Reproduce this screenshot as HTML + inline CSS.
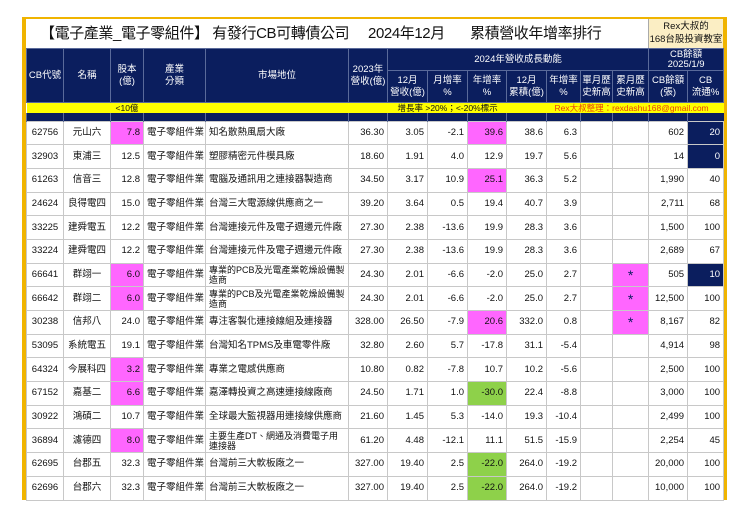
<!DOCTYPE html>
<html><head><meta charset="utf-8"><style>
*{margin:0;padding:0;box-sizing:border-box}
body{width:740px;height:523px;background:#fff;position:relative;overflow:hidden;font-family:"Liberation Sans","Noto Sans CJK TC",sans-serif;color:#111}
#frame{position:absolute;left:22px;top:17px;width:705px;height:483px;border:4px solid #f0b400;border-top-width:2px;border-bottom:0}
#title{position:absolute;left:26px;top:19px;width:697px;height:29px;background:#fff;font-size:15px;letter-spacing:-0.4px;line-height:29px;white-space:nowrap}
#title span{position:absolute;top:0}
#rex{position:absolute;left:622px;top:0;width:75px;height:29px;background:#fbeec4;border-left:1px solid #aaa;font-size:9.5px;letter-spacing:0;line-height:13px;text-align:center;padding-top:1px}
table{position:absolute;left:26px;top:48px;border-collapse:collapse;table-layout:fixed;width:697px;font-size:9.5px}
td{overflow:hidden;white-space:nowrap;padding:0 3px}
.h td{background:#0b1e5e;color:#fff;text-align:center;border:1px solid #5a6a9a;line-height:12px;font-size:9.5px;padding:0 1px}
.h td.t{line-height:10px}
.y td{background:#ffff00;height:10px;font-size:8.5px;line-height:10px;border:0;overflow:visible}
.n td{background:#0b1e5e;height:8px;border-left:1px solid #5a6a9a}
.d td{height:23.7px;border:1px solid #c8c8c8;text-align:right;line-height:10px}
.d td.c{text-align:center}.d td.l{text-align:left}
.w{white-space:normal!important;font-size:9px}
.p{background:#ff66ff}.g{background:#8ed14a}.b{background:#0b1e5e;color:#fff}
.s{background:#ff66ff;text-align:center!important;color:#0b1e5e;font-size:14px}
</style></head><body>
<div id="frame"></div>
<div id="title">
<span style="left:14px">【電子產業_電子零組件】 有發行CB可轉債公司</span>
<span style="left:342px">2024年12月</span>
<span style="left:444px">累積營收年增率排行</span>
<div id="rex">Rex大叔的<br>168台股投資教室</div>
</div>
<table>
<colgroup><col style="width:37px"><col style="width:47px"><col style="width:33px"><col style="width:62px"><col style="width:143px"><col style="width:39px"><col style="width:40px"><col style="width:40px"><col style="width:39px"><col style="width:40px"><col style="width:34px"><col style="width:32px"><col style="width:36px"><col style="width:39px"><col style="width:36px"></colgroup>
<tr class="h" style="height:22px"><td rowspan="2">CB代號</td><td rowspan="2">名稱</td><td rowspan="2">股本<br>(億)</td><td rowspan="2">產業<br>分類</td><td rowspan="2">市場地位</td><td rowspan="2">2023年<br>營收(億)</td><td colspan="7">2024年營收成長動能</td><td colspan="2" class="t">CB餘額<br>2025/1/9</td></tr>
<tr class="h" style="height:32px"><td>12月<br>營收(億)</td><td>月增率<br>%</td><td>年增率<br>%</td><td>12月<br>累積(億)</td><td>年增率<br>%</td><td>單月歷<br>史新高</td><td>累月歷<br>史新高</td><td>CB餘額<br>(張)</td><td>CB<br>流通%</td></tr>
<tr class="y"><td></td><td></td><td colspan="3" style="padding-left:5px">&lt;10億</td><td></td><td colspan="4" style="padding-left:10px">增長率 &gt;20%；&lt;-20%標示</td><td colspan="5" style="color:#e8420a;padding-left:8px">Rex大叔整理：rexdashu168@gmail.com</td></tr>
<tr class="n"><td></td><td></td><td></td><td></td><td></td><td></td><td></td><td></td><td></td><td></td><td></td><td></td><td></td><td></td><td></td></tr>
<tr class="d"><td class="c">62756</td><td class="c">元山六</td><td class="p">7.8</td><td class="l">電子零組件業</td><td class="l">知名散熱風扇大廠</td><td>36.30</td><td>3.05</td><td>-2.1</td><td class="p">39.6</td><td>38.6</td><td>6.3</td><td></td><td></td><td>602</td><td class="b">20</td></tr>
<tr class="d"><td class="c">32903</td><td class="c">東浦三</td><td>12.5</td><td class="l">電子零組件業</td><td class="l">塑膠精密元件模具廠</td><td>18.60</td><td>1.91</td><td>4.0</td><td>12.9</td><td>19.7</td><td>5.6</td><td></td><td></td><td>14</td><td class="b">0</td></tr>
<tr class="d"><td class="c">61263</td><td class="c">信音三</td><td>12.8</td><td class="l">電子零組件業</td><td class="l">電腦及通訊用之連接器製造商</td><td>34.50</td><td>3.17</td><td>10.9</td><td class="p">25.1</td><td>36.3</td><td>5.2</td><td></td><td></td><td>1,990</td><td>40</td></tr>
<tr class="d"><td class="c">24624</td><td class="c">良得電四</td><td>15.0</td><td class="l">電子零組件業</td><td class="l">台灣三大電源線供應商之一</td><td>39.20</td><td>3.64</td><td>0.5</td><td>19.4</td><td>40.7</td><td>3.9</td><td></td><td></td><td>2,711</td><td>68</td></tr>
<tr class="d"><td class="c">33225</td><td class="c">建舜電五</td><td>12.2</td><td class="l">電子零組件業</td><td class="l">台灣連接元件及電子週邊元件廠</td><td>27.30</td><td>2.38</td><td>-13.6</td><td>19.9</td><td>28.3</td><td>3.6</td><td></td><td></td><td>1,500</td><td>100</td></tr>
<tr class="d"><td class="c">33224</td><td class="c">建舜電四</td><td>12.2</td><td class="l">電子零組件業</td><td class="l">台灣連接元件及電子週邊元件廠</td><td>27.30</td><td>2.38</td><td>-13.6</td><td>19.9</td><td>28.3</td><td>3.6</td><td></td><td></td><td>2,689</td><td>67</td></tr>
<tr class="d"><td class="c">66641</td><td class="c">群翊一</td><td class="p">6.0</td><td class="l">電子零組件業</td><td class="l w">專業的PCB及光電產業乾燥設備製造商</td><td>24.30</td><td>2.01</td><td>-6.6</td><td>-2.0</td><td>25.0</td><td>2.7</td><td></td><td class="s">*</td><td>505</td><td class="b">10</td></tr>
<tr class="d"><td class="c">66642</td><td class="c">群翊二</td><td class="p">6.0</td><td class="l">電子零組件業</td><td class="l w">專業的PCB及光電產業乾燥設備製造商</td><td>24.30</td><td>2.01</td><td>-6.6</td><td>-2.0</td><td>25.0</td><td>2.7</td><td></td><td class="s">*</td><td>12,500</td><td>100</td></tr>
<tr class="d"><td class="c">30238</td><td class="c">信邦八</td><td>24.0</td><td class="l">電子零組件業</td><td class="l">專注客製化連接線組及連接器</td><td>328.00</td><td>26.50</td><td>-7.9</td><td class="p">20.6</td><td>332.0</td><td>0.8</td><td></td><td class="s">*</td><td>8,167</td><td>82</td></tr>
<tr class="d"><td class="c">53095</td><td class="c">系統電五</td><td>19.1</td><td class="l">電子零組件業</td><td class="l">台灣知名TPMS及車電零件廠</td><td>32.80</td><td>2.60</td><td>5.7</td><td>-17.8</td><td>31.1</td><td>-5.4</td><td></td><td></td><td>4,914</td><td>98</td></tr>
<tr class="d"><td class="c">64324</td><td class="c">今展科四</td><td class="p">3.2</td><td class="l">電子零組件業</td><td class="l">專業之電感供應商</td><td>10.80</td><td>0.82</td><td>-7.8</td><td>10.7</td><td>10.2</td><td>-5.6</td><td></td><td></td><td>2,500</td><td>100</td></tr>
<tr class="d"><td class="c">67152</td><td class="c">嘉基二</td><td class="p">6.6</td><td class="l">電子零組件業</td><td class="l">嘉澤轉投資之高速連接線廠商</td><td>24.50</td><td>1.71</td><td>1.0</td><td class="g">-30.0</td><td>22.4</td><td>-8.8</td><td></td><td></td><td>3,000</td><td>100</td></tr>
<tr class="d"><td class="c">30922</td><td class="c">鴻碩二</td><td>10.7</td><td class="l">電子零組件業</td><td class="l">全球最大監視器用連接線供應商</td><td>21.60</td><td>1.45</td><td>5.3</td><td>-14.0</td><td>19.3</td><td>-10.4</td><td></td><td></td><td>2,499</td><td>100</td></tr>
<tr class="d"><td class="c">36894</td><td class="c">濾德四</td><td class="p">8.0</td><td class="l">電子零組件業</td><td class="l w">主要生產DT、網通及消費電子用連接器</td><td>61.20</td><td>4.48</td><td>-12.1</td><td>11.1</td><td>51.5</td><td>-15.9</td><td></td><td></td><td>2,254</td><td>45</td></tr>
<tr class="d"><td class="c">62695</td><td class="c">台郡五</td><td>32.3</td><td class="l">電子零組件業</td><td class="l">台灣前三大軟板廠之一</td><td>327.00</td><td>19.40</td><td>2.5</td><td class="g">-22.0</td><td>264.0</td><td>-19.2</td><td></td><td></td><td>20,000</td><td>100</td></tr>
<tr class="d"><td class="c">62696</td><td class="c">台郡六</td><td>32.3</td><td class="l">電子零組件業</td><td class="l">台灣前三大軟板廠之一</td><td>327.00</td><td>19.40</td><td>2.5</td><td class="g">-22.0</td><td>264.0</td><td>-19.2</td><td></td><td></td><td>10,000</td><td>100</td></tr>
</table>
</body></html>
